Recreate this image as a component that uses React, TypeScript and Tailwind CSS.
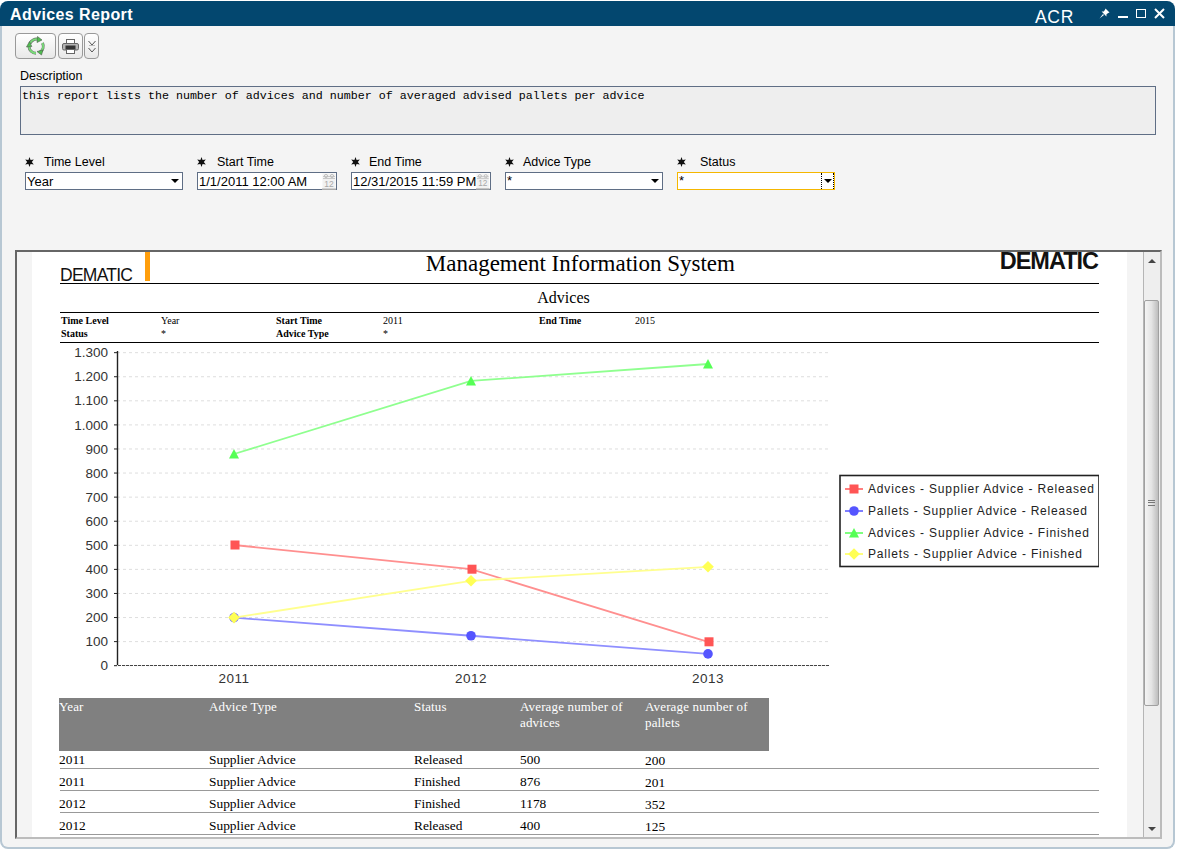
const SANS = "font-['Liberation_Sans',Arial,sans-serif]";

const ticks = ["0", "100", "200", "300", "400", "500", "600", "700", "800", "900", "1.000", "1.100", "1.200", "1.300"];
const years = [
	{ label: "2011", x: 234 },
	{ label: "2012", x: 471 },
	{ label: "2013", x: 708 },
];

const tickY = (index: number) => 665.7 - index * 24.08;
const valueY = (value: number) => 666 - (value / 100) * 24.2;

const series = [
	{ name: "Advices - Supplier Advice - Released", values: [500, 400, 100], line: "#ff8f8f", fill: "#ff5555", marker: "square", legendY: 489, width: 226 },
	{ name: "Pallets - Supplier Advice - Released", values: [200, 125, 50], line: "#8f8fff", fill: "#5555ff", marker: "circle", legendY: 511, width: 219 },
	{ name: "Advices - Supplier Advice - Finished", values: [876, 1178, 1248], line: "#8fff8f", fill: "#55ff55", marker: "triangle", legendY: 533, width: 221 },
	{ name: "Pallets - Supplier Advice - Finished", values: [200, 352, 410], line: "#ffff8f", fill: "#ffff55", marker: "diamond", legendY: 554, width: 214 },
];

const filters = [
	{ label: "Time Level", value: "Year", kind: "select", column: "w-[158px]", offset: "ml-[10px]" },
	{ label: "Start Time", value: "1/1/2011 12:00 AM", kind: "date", column: "w-[140px]", offset: "ml-[11px]" },
	{ label: "End Time", value: "12/31/2015 11:59 PM", kind: "date", column: "w-[140px]", offset: "ml-[9px]" },
	{ label: "Advice Type", value: "*", kind: "select", column: "w-[158px]", offset: "ml-[9px]" },
	{ label: "Status", value: "*", kind: "focus", column: "w-[158px]", offset: "ml-[14px]" },
];

const rows = [
	["2011", "Supplier Advice", "Released", "500", "200"],
	["2011", "Supplier Advice", "Finished", "876", "201"],
	["2012", "Supplier Advice", "Finished", "1178", "352"],
	["2012", "Supplier Advice", "Released", "400", "125"],
];

const Marker = ({ kind, x, y, fill }: { kind: string; x: number; y: number; fill: string }) => {
	if (kind === "square") return <rect x={x - 4.5} y={y - 4.5} width={9} height={9} fill={fill} />;
	if (kind === "circle") return <circle cx={x} cy={y} r={4.8} fill={fill} />;
	if (kind === "triangle") return <polygon points={`${x},${y - 5} ${x + 5},${y + 4.5} ${x - 5},${y + 4.5}`} fill={fill} />;
	return <polygon points={`${x},${y - 5.8} ${x + 5.8},${y} ${x},${y + 5.8} ${x - 5.8},${y}`} fill={fill} />;
};

const RefreshIcon = () => (
	<svg width="20" height="20" viewBox="0 0 20 20" fill="none">
		<path d="M4 7.5A7 7 0 0 1 12.5 3.4" stroke="#6f7a6f" strokeWidth="3" />
		<path d="M16.5 7A7 7 0 0 1 14 16" stroke="#6f7a6f" strokeWidth="3" />
		<path d="M10 17.2A7 7 0 0 1 3 10.5" stroke="#6f7a6f" strokeWidth="3" />
		<path d="M4 7.5A7 7 0 0 1 12.5 3.4" stroke="#78dc78" strokeWidth="1.8" />
		<path d="M16.5 7A7 7 0 0 1 14 16" stroke="#78dc78" strokeWidth="1.8" />
		<path d="M10 17.2A7 7 0 0 1 3 10.5" stroke="#78dc78" strokeWidth="1.8" />
		<path d="M11.5 0.5L16 4L11 6.5Z" fill="#4fbf4f" stroke="#4d5a4d" strokeWidth="0.6" />
		<path d="M17 14L15.5 19L11 15.5Z" fill="#4fbf4f" stroke="#4d5a4d" strokeWidth="0.6" />
		<path d="M0.5 11L5.8 10.5L3.5 5.5Z" fill="#4fbf4f" stroke="#4d5a4d" strokeWidth="0.6" />
	</svg>
);

const PrinterIcon = () => (
	<svg width="17" height="15" viewBox="0 0 17 15">
		<rect x="4.5" y="0.5" width="8" height="5" fill="#fff" stroke="#666" />
		<rect x="0.5" y="4.5" width="16" height="6.5" rx="1.5" fill="#b4b4b4" stroke="#666" />
		<rect x="3.5" y="6.5" width="10" height="4" fill="#333" />
		<rect x="4.5" y="10.5" width="8" height="4" fill="#fff" stroke="#666" />
	</svg>
);

const MoreIcon = () => (
	<svg width="8" height="13" viewBox="0 0 8 13" fill="none" stroke="#555">
		<path d="M0.5 1L4 5L7.5 1" />
		<path d="M0.5 8L4 12L7.5 8" />
		<path d="M1 5.5H7" stroke="#bbb" />
	</svg>
);

const PinIcon = () => (
	<svg width="11" height="11" viewBox="0 0 11 11" fill="#fff">
		<path d="M6.5 0.5L10.5 4.5L9.2 5L7.5 6.2L7.4 8.4L2.6 3.6L4.8 3.5L6 1.8Z" />
		<path d="M4 6L0.5 10.5L5 7Z" />
	</svg>
);

const StarIcon = () => (
	<svg width="9" height="10" viewBox="0 0 9 10" fill="#111">
		<path d="M4.5 0L5.6 3L8.8 2.5L6.8 5L8.8 7.5L5.6 7L4.5 10L3.4 7L0.2 7.5L2.2 5L0.2 2.5L3.4 3Z" />
	</svg>
);

const CalendarIcon = () => (
	<svg width="14" height="17" viewBox="0 0 14 17">
		<rect x="0.5" y="0.5" width="13" height="15" fill="#f2f2f2" />
		<path d="M1 3.5H13M1 5.5H13" stroke="#c8c8c8" />
		<circle cx="4" cy="3" r="1.6" fill="none" stroke="#c0c0c0" />
		<circle cx="10" cy="3" r="1.6" fill="none" stroke="#c0c0c0" />
		<text x="7" y="13.5" textAnchor="middle" fontSize="8.5" fill="#a8a8a8" fontFamily="Liberation Sans">12</text>
		<rect x="0" y="15.5" width="14" height="1.5" fill="#aaa" />
	</svg>
);

const Caret = () => <span className="h-0 w-0 border-x-[4px] border-t-[4px] border-x-transparent border-t-black" />;

const FilterInput = ({ kind, value }: { kind: string; value: string }) => {
	if (kind === "date") {
		return (
			<div className="flex h-[18px] items-center justify-between border border-[#5f6e85] bg-white pl-[1px] text-[13px] leading-none text-black">
				<span className="whitespace-nowrap">{value}</span>
				<CalendarIcon />
			</div>
		);
	}
	if (kind === "focus") {
		return (
			<div className="flex h-[18px] justify-between border border-[#f5b700] bg-white pl-[1px] text-[13px] leading-[15px] text-black">
				<span>{value}</span>
				<div className="flex w-[13px] items-center justify-center border-x border-dotted border-black">
					<Caret />
				</div>
			</div>
		);
	}
	return (
		<div className={`flex h-[18px] justify-between border border-[#5f6e85] bg-white pl-[1px] pr-[3px] text-[13px] text-black ${value === "*" ? "leading-[15px]" : "leading-[17px]"}`}>
			<span>{value}</span>
			<div className="flex items-center">
				<Caret />
			</div>
		</div>
	);
};

const Chart = () => (
	<svg width="1039" height="355" viewBox="60 343 1039 355" className="block">
		{ticks.map((tick, index) => (
			<g key={tick}>
				<line x1={117} x2={829} y1={tickY(index)} y2={tickY(index)} stroke="#dedede" strokeDasharray="3 3" />
				<line x1={114} x2={117} y1={tickY(index)} y2={tickY(index)} stroke="#222" />
				<text x={108} y={tickY(index) + 4.6} textAnchor="end" fontSize="13.5" fill="#333" fontFamily="Liberation Sans">
					{tick}
				</text>
			</g>
		))}
		<line x1={117.5} x2={117.5} y1={351} y2={665} stroke="#222" strokeWidth="1.4" />
		<line x1={114} x2={829} y1={665.5} y2={665.5} stroke="#444" strokeDasharray="3 1" strokeWidth="1.2" />
		{years.map((year) => (
			<text key={year.label} x={year.x} y={683} textAnchor="middle" fontSize="13.5" letterSpacing="0.5" fill="#333" fontFamily="Liberation Sans">
				{year.label}
			</text>
		))}
		{series.map((item) => (
			<polyline
				key={item.name}
				points={item.values.map((value, index) => `${years[index].x},${valueY(value)}`).join(" ")}
				fill="none"
				stroke={item.line}
				strokeWidth="1.8"
			/>
		))}
		{series.map((item) =>
			item.values.map((value, index) => (
				<Marker key={`${item.name}-${index}`} kind={item.marker} x={years[index].x + (item.marker === "square" ? 1 : 0)} y={valueY(value)} fill={item.fill} />
			)),
		)}
		<rect x={840} y={475.5} width={259} height={91} fill="#fff" stroke="#222" strokeWidth="1.6" />
		{series.map((item) => (
			<g key={item.name}>
				<line x1={845} x2={863} y1={item.legendY} y2={item.legendY} stroke={item.fill} strokeWidth="1.5" />
				<Marker kind={item.marker} x={854} y={item.legendY} fill={item.fill} />
				<text x={868} y={item.legendY + 4} fontSize="12" fill="#222" fontFamily="Liberation Sans" textLength={item.width}>
					{item.name}
				</text>
			</g>
		))}
	</svg>
);

const Scrollbar = () => (
	<div className="flex w-[17px] flex-col border-l border-[#b5b5b5] bg-[#eeeeee]">
		<div className="flex h-[48px] justify-center pr-px pt-[7px]">
			<span className="h-0 w-0 border-x-[4px] border-b-[4px] border-x-transparent border-b-[#444]" />
		</div>
		<div className="flex h-[406px] w-[15px] items-center justify-center rounded-[2px] border border-[#a0a0a0] bg-gradient-to-r from-[#f4f4f4] via-[#e4e4e4] to-[#bdbdbd]">
			<div className="h-[6px] w-[7px] border-y border-[#777] after:mt-[1px] after:block after:h-px after:bg-[#777]" />
		</div>
		<div className="flex flex-1 items-end justify-center pb-[6px] pr-px">
			<span className="h-0 w-0 border-x-[4px] border-t-[4px] border-x-transparent border-t-[#444]" />
		</div>
	</div>
);

export default function App() {
	return (
		<div className={`h-[849px] w-[1177px] overflow-hidden bg-white pt-px ${SANS}`}>
			<div className="flex h-[848px] w-[1175px] flex-col">
				<div className="flex h-[25px] items-center justify-between rounded-t-[8px] bg-[#03476f] pl-[10px] pr-[10px] text-white">
					<span className="mt-[3px] text-[16px] font-bold leading-[20px] tracking-[0.4px]">Advices Report</span>
					<div className="flex items-center">
						<span className="mr-[25px] mt-[6px] text-[17.5px] leading-[20px] tracking-[0.7px]">ACR</span>
						<div className="mr-[8px]">
							<PinIcon />
						</div>
						<div className="mr-[8px] mt-[7px] h-[2px] w-[10px] bg-white" />
						<div className="mr-[8px] h-[9px] w-[10px] border border-white" />
						<svg width="11" height="11" viewBox="0 0 11 11" stroke="#fff" strokeWidth="2">
							<path d="M1 1L10 10M10 1L1 10" />
						</svg>
					</div>
				</div>

				<div className="flex flex-1 flex-col rounded-b-[8px] border-x-2 border-b-2 border-[#b7c7d3] bg-[#f4f4f4] pl-[13px] pr-[13px]">
					<div className="flex pt-[7px]">
						<button className="flex h-[26px] w-[41px] items-center justify-center rounded-[4px] border border-[#999] bg-gradient-to-b from-white to-[#e8e8e8]">
							<RefreshIcon />
						</button>
						<button className="ml-[2px] flex h-[26px] w-[25px] items-center justify-center rounded-[4px] border border-[#999] bg-gradient-to-b from-white to-[#e8e8e8]">
							<PrinterIcon />
						</button>
						<button className="ml-px flex h-[26px] w-[15px] items-center justify-center rounded-[4px] border border-[#999] bg-gradient-to-b from-white to-[#e8e8e8]">
							<MoreIcon />
						</button>
					</div>

					<div className="ml-[5px] mt-[10px] h-[17px] text-[12.5px] leading-[15px] text-black">Description</div>
					<div className="ml-[5px] h-[49px] w-[1136px] border border-[#5f6e85] bg-[#eeeeee] pl-[1px] font-['Liberation_Mono',monospace] text-[11.67px] leading-[19px] text-black">
						this report lists the number of advices and number of averaged advised pallets per advice
					</div>

					<div className="ml-[10px] mt-[18px] flex gap-[14px]">
						{filters.map((filter) => (
							<div key={filter.label} className={filter.column}>
								<div className="flex h-[19px] items-center pb-px text-[12.5px] text-black">
									<StarIcon />
									<span className={filter.offset}>{filter.label}</span>
								</div>
								<FilterInput kind={filter.kind} value={filter.value} />
							</div>
						))}
					</div>

					<div className="mt-[60px] flex h-[588.5px] w-[1147px] overflow-hidden border-b-2 border-l-2 border-r-2 border-t-2 border-b-[#bcbcbc] border-l-[#666] border-r-[#bcbcbc] border-t-[#666]">
						<div className="w-[15px] bg-[#f4f4f4]" />
						<div className="w-[1095px] overflow-hidden bg-white px-[28px]">
							<div className="flex h-[32px] justify-between border-b border-black">
								<div className="flex items-end pb-[1px]">
									<span className="w-[85px] text-[17.5px] leading-[14px] tracking-[-0.75px] text-[#111]">DEMATIC</span>
									<div className="h-[29px] w-[5px] self-start bg-[#ff9e0c]" />
								</div>
								<div className="ml-[11px] font-['Liberation_Serif',serif] text-[23px] leading-[24px] text-black">Management Information System</div>
								<div className="mr-px text-[23.5px] font-bold leading-[18px] tracking-[-1px] text-[#111]">DEMATIC</div>
							</div>
							<div className="h-[29px] border-b border-black pr-[32px] text-center font-['Liberation_Serif',serif] text-[16px] leading-[27px] text-black">Advices</div>
							<div className="grid h-[30px] grid-cols-[100px_115px_107px_156px_96px_1fr] content-start border-b border-black pl-px pt-px font-['Liberation_Serif',serif] text-[10px] leading-[13px] text-black">
								<span className="font-bold">Time Level</span>
								<span>Year</span>
								<span className="font-bold">Start Time</span>
								<span>2011</span>
								<span className="font-bold">End Time</span>
								<span>2015</span>
								<span className="font-bold">Status</span>
								<span>*</span>
								<span className="font-bold">Advice Type</span>
								<span>*</span>
							</div>
							<Chart />
							<div className="-ml-px h-[53px] w-[710px] bg-[#808080] font-['Liberation_Serif',serif] text-[13px] leading-[16px] tracking-[0.15px] text-white">
								<div className="grid grid-cols-[150px_205px_106px_125px_1fr] pt-px">
									<span>Year</span>
									<span>Advice Type</span>
									<span>Status</span>
									<span className="w-[112px]">Average number of advices</span>
									<span className="w-[112px]">Average number of pallets</span>
								</div>
							</div>
							{rows.map((row, index) => (
								<div
									key={`${row[0]}-${row[2]}`}
									className={`grid grid-cols-[150px_205px_106px_125px_1fr] items-center border-b border-[#999] font-['Liberation_Serif',serif] text-[13.4px] leading-[16px] text-black ${index === 0 ? "h-[18px]" : "h-[22px] pt-[4px]"}`}
								>
									<span className="-ml-px">{row[0]}</span>
									<span className="-ml-px">{row[1]}</span>
									<span className="-ml-px">{row[2]}</span>
									<span className="-ml-px">{row[3]}</span>
									<span className="-ml-px pt-[2px]">{row[4]}</span>
								</div>
							))}
						</div>
						<div className="w-[16px] bg-[#f4f4f4]" />
						<Scrollbar />
					</div>
				</div>
			</div>
		</div>
	);
}
